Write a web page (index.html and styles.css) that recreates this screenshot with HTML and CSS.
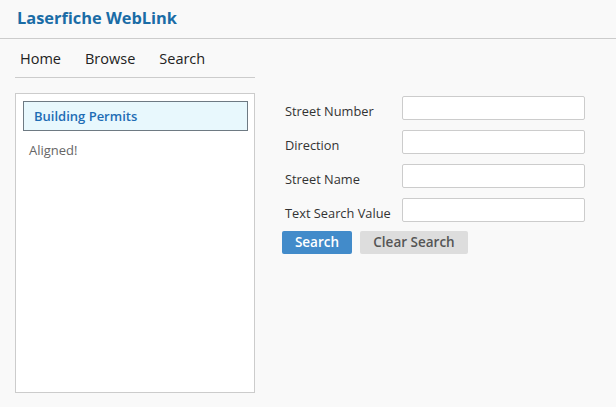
FILE: index.html
```html
<!DOCTYPE html>
<html>
<head>
<meta charset="utf-8">
<link rel="stylesheet" href="styles.css">
</head>
<body>
<header class="top">
  <div class="brand">Laserfiche WebLink</div>
</header>
<nav class="nav">
  <a class="nav-item">Home</a>
  <a class="nav-item">Browse</a>
  <a class="nav-item">Search</a>
</nav>
<main class="main">
  <aside class="panel">
    <div class="selected">Building Permits</div>
    <div class="note">Aligned!</div>
  </aside>
  <section class="form">
    <div class="row"><label class="label">Street Number</label><input class="field" type="text"></div>
    <div class="row"><label class="label">Direction</label><input class="field" type="text"></div>
    <div class="row"><label class="label">Street Name</label><input class="field" type="text"></div>
    <div class="row"><label class="label">Text Search Value</label><input class="field" type="text"></div>
    <div class="buttons">
      <button class="btn btn-primary">Search</button>
      <button class="btn btn-default">Clear Search</button>
    </div>
  </section>
</main>
</body>
</html>
```
FILE: styles.css
```css
html, body {
  margin: 0;
  padding: 0;
  background: #f9f9f9;
  font-family: "Open Sans", "Noto Sans", sans-serif;
  color: #333;
}
.top {
  height: 39px;
  border-bottom: 1px solid #cccccc;
  box-sizing: border-box;
  padding: 6px 0 0 17px;
}
.brand {
  font-size: 16.4px;
  font-weight: 700;
  color: #1a6ca6;
  line-height: 24px;
}
.nav {
  display: flex;
  gap: 24px;
  margin: 0 0 0 15px;
  width: 240px;
  height: 39px;
  box-sizing: border-box;
  border-bottom: 1px solid #cccccc;
  padding: 9px 0 0 5px;
}
.nav-item {
  font-size: 14.5px;
  color: #222;
  line-height: 22px;
}
.main {
  display: flex;
  padding: 15px 0 0 15px;
}
.panel {
  width: 240px;
  height: 300px;
  box-sizing: border-box;
  border: 1px solid #cccccc;
  background: #ffffff;
  padding: 7px 6px 0 7px;
}
.selected {
  height: 30px;
  box-sizing: border-box;
  border: 1px solid #6e7a83;
  background: #e8f8fd;
  color: #1e6db5;
  font-size: 13px;
  font-weight: 600;
  line-height: 28px;
  padding-left: 10px;
}
.note {
  font-size: 13px;
  color: #666;
  padding: 9px 0 0 6px;
  line-height: 20px;
}
.form {
  margin-left: 27px;
  padding-top: 3px;
  display: flex;
  flex-direction: column;
}
.row {
  display: flex;
  align-items: center;
  height: 24px;
  margin-bottom: 10px;
}
.label {
  width: 117px;
  padding: 6px 0 0 3px;
  font-size: 12.8px;
  color: #333;
}
.field {
  width: 183px;
  height: 24px;
  box-sizing: border-box;
  border: 1px solid #cccccc;
  border-radius: 2px;
  background: #fff;
  margin: 0;
  padding: 0 4px;
}
.buttons {
  display: flex;
  gap: 8px;
  margin-top: -1px;
}
.btn {
  height: 23px;
  border: none;
  border-radius: 2px;
  font-family: "Open Sans", "Noto Sans", sans-serif;
  font-size: 13.5px;
  font-weight: 600;
  padding: 0;
  margin: 0;
  line-height: 23px;
}
.btn-primary {
  width: 70px;
  background: #428bca;
  color: #fff;
}
.btn-default {
  width: 108px;
  background: #dddddd;
  color: #555;
}
```
